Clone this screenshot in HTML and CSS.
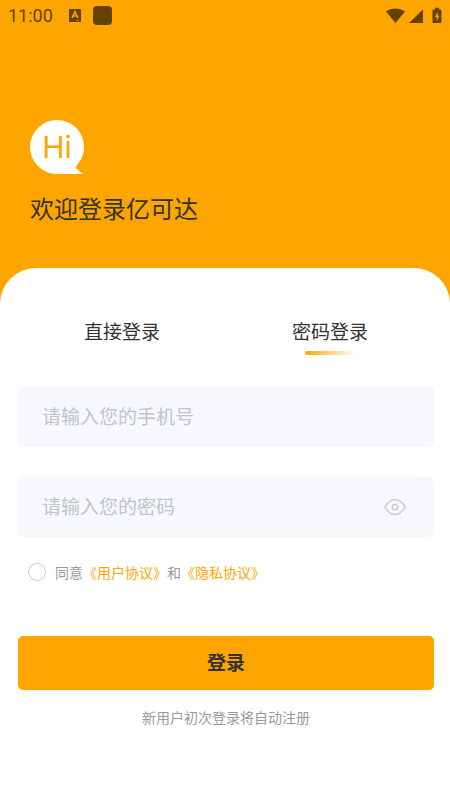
FILE: index.html
```html
<!DOCTYPE html>
<html lang="zh-CN">
<head>
<meta charset="utf-8">
<meta name="viewport" content="width=device-width, initial-scale=1">
<title>登录</title>
<link rel="stylesheet" href="styles.css">
</head>
<body>
<header class="hero">
  <div class="status">
    <span class="time">11:00</span>
    <svg class="status-app" width="12" height="13" viewBox="0 0 12 13" aria-hidden="true">
      <rect width="12" height="13" rx="1" fill="#664200"/>
      <path d="M3 9 6 2.5 9 9M4 7h4" fill="none" stroke="#ffa500" stroke-width="1.5"/>
      <path d="M7 11.5h3" stroke="#ffa500" stroke-width=".6"/>
    </svg>
    <span class="status-square"></span>
    <svg class="status-system" width="56" height="18" viewBox="0 0 56 18" fill="#664200" aria-hidden="true">
      <path d="M0 4.600C5.500.300 13.500.300 19 4.600L9.500 16z"/>
      <path d="M37 2.500V16H23z"/>
      <path d="M49 .8h4v1.700h1.500q1 0 1 1V15q0 1-1 1h-7q-1 0-1-1V3.500q0-1 1-1H49z"/>
      <path d="M51.800 4.500 48.700 10h2v4.200L53.500 8.500h-2z" fill="#ffa500"/>
    </svg>
  </div>
  <div class="welcome">
    <div class="logo">
      <svg class="bubble" viewBox="0 0 54 54" aria-hidden="true">
        <path d="M27 0A27 27 0 0 1 45.800 46.400Q45 48.500 53.500 54H27A27 27 0 0 1 27 0z" fill="#fff"/>
      </svg>
      <span class="hi">Hi</span>
    </div>
    <h1 class="title">欢迎登录亿可达</h1>
  </div>
</header>
<main class="card">
  <div class="tabs" role="tablist">
    <button class="tab" type="button" role="tab" aria-selected="false">直接登录</button>
    <button class="tab" type="button" role="tab" aria-selected="true">密码登录</button>
  </div>
  <form class="form">
    <div class="field">
      <input class="input" type="tel" aria-label="手机号" placeholder="请输入您的手机号">
    </div>
    <div class="field">
      <input class="input" type="password" aria-label="密码" placeholder="请输入您的密码">
      <button class="eye" type="button" aria-label="显示密码">
        <svg width="22" height="18" viewBox="0 0 22 18" fill="none" stroke="#ccc" stroke-width="1.500" aria-hidden="true">
          <path d="M.8 9Q5.500 1.400 11 1.400T21.200 9Q16.500 16.600 11 16.600T.8 9z"/>
          <circle cx="11" cy="9" r="2.800"/>
        </svg>
      </button>
    </div>
    <div class="agree">
      <input class="check" id="agree" type="checkbox">
      <label for="agree">同意</label><a class="link" href="#terms">《用户协议》</a><span>和</span><a class="link" href="#privacy">《隐私协议》</a>
    </div>
    <button class="submit" type="submit">登录</button>
  </form>
  <p class="note">新用户初次登录将自动注册</p>
</main>
</body>
</html>
```
FILE: styles.css
```css
* {
  box-sizing: border-box;
}

body {
  margin: 0;
  background: #fff;
  color: #333;
  font-family: "Noto Sans CJK SC", sans-serif;
}

button,
input {
  margin: 0;
  padding: 0;
  border: 0;
  background: none;
  color: inherit;
  font: inherit;
}

.hero {
  padding-bottom: 80px;
  background: #ffa500;
}

.status {
  display: flex;
  align-items: center;
  height: 31px;
  padding: 0 8px;
}

.time {
  color: #664200;
  font: 18px/30px Roboto, sans-serif;
}

.status-app {
  margin-left: 16px;
}

.status-square {
  width: 19px;
  height: 19px;
  margin-left: 12px;
  border-radius: 4px;
  background: #664200;
}

.status-system {
  margin-left: auto;
}

.welcome {
  padding: 89px 30px 0;
}

.logo {
  display: grid;
  width: 54px;
  height: 54px;
}

.bubble,
.hi {
  grid-area: 1 / 1;
}

.hi {
  color: #ffa500;
  font: 30px/54px Inter, sans-serif;
  text-align: center;
}

.title {
  margin: 16px 0 0;
  font-size: 24px;
  font-weight: 400;
  line-height: 36px;
}

.card {
  margin-top: -38px;
  padding: 48px 16px 24px 18px;
  border-radius: 36px 36px 0 0;
  background: #fff;
}

.tabs {
  display: grid;
  grid-template-columns: 1fr 1fr;
}

.tab {
  display: flex;
  flex-direction: column;
  align-items: center;
  font-size: 19px;
  line-height: 30px;
}

.tab::after {
  content: "";
  width: 50px;
  height: 4px;
  margin-top: 5px;
  border-radius: 2px;
}

.tab[aria-selected="true"]::after {
  background: linear-gradient(90deg, #ffa500, #fff);
}

.form {
  display: flex;
  flex-direction: column;
  gap: 30px;
  margin-top: 32px;
}

.field {
  display: flex;
  align-items: center;
  height: 60px;
  padding: 0 28px 0 24px;
  border-radius: 5px;
  background: #f6f8fc;
}

.input {
  flex: 1;
  min-width: 0;
  height: 100%;
  padding-bottom: 4px;
  outline: 0;
  font-size: 19px;
}

.input::placeholder {
  color: #c0c4cc;
  opacity: 1;
}

.eye {
  display: flex;
  cursor: pointer;
}

.agree {
  display: flex;
  align-items: center;
  height: 22px;
  margin: -6px 0 23px;
  padding-left: 10px;
  color: #999;
  font-size: 14px;
  line-height: 20px;
}

.check {
  width: 18px;
  height: 18px;
  margin-right: 9px;
  border: 1px solid #ccc;
  border-radius: 50%;
  appearance: none;
}

.check:checked {
  border: 5px solid #ffa500;
}

.link {
  color: #ffa500;
  text-decoration: none;
}

.submit {
  height: 54px;
  padding-bottom: 4px;
  border-radius: 5px;
  background: #ffa500;
  font-size: 19px;
  font-weight: 700;
}

.note {
  margin: 17px 0 0;
  color: #999;
  font-size: 14px;
  line-height: 20px;
  text-align: center;
}
```
